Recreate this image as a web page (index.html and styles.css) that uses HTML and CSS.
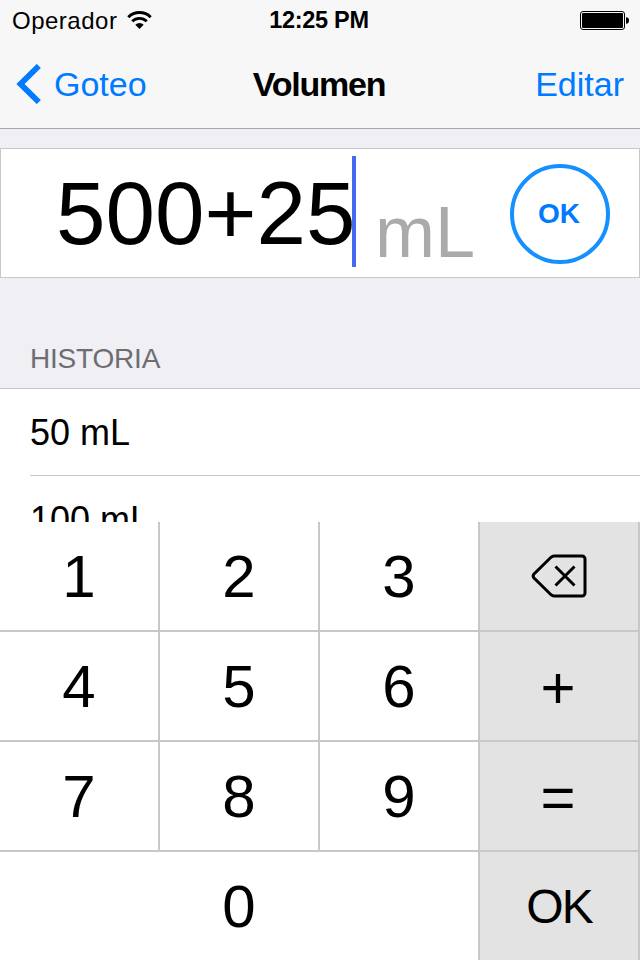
FILE: index.html
```html
<!DOCTYPE html>
<html lang="es">
<head>
    <meta charset="UTF-8">
    <meta name="viewport" content="width=device-width, initial-scale=1.0">
    <title>Volumen</title>
    <link rel="stylesheet" href="styles.css">
</head>
<body>
    <div class="screen">
        <div class="status-bar">
            <div class="carrier">
                <span>Operador</span>
                <svg class="wifi" width="25" height="18" viewBox="0 0 25 18">
                    <path d="M1.300 6.200a15.900 15.900 0 0 1 22.400 0" fill="none" stroke="#000" stroke-width="3"/>
                    <path d="M5.200 10.300a10.400 10.400 0 0 1 14.600 0" fill="none" stroke="#000" stroke-width="2.800"/>
                    <path d="M12.500 18L8.300 13.800a6 6 0 0 1 8.400 0z"/>
                </svg>
            </div>
            <span class="clock">12:25 PM</span>
            <svg class="battery" width="50" height="20" viewBox="0 0 50 20">
                <rect x="0.5" y="0.5" width="44" height="18" rx="2.5" fill="none" stroke="#000"/>
                <rect x="2" y="2" width="41" height="15" rx="1"/>
                <path d="M46 6.3q3 0 3 3.2t-3 3.2z"/>
            </svg>
        </div>

        <div class="nav-bar">
            <a class="nav-back">
                <svg width="25" height="40" viewBox="0 0 25 40">
                    <path d="M22.8 2L4.500 20l18.300 18" fill="none" stroke="#007aff" stroke-width="5.8"/>
                </svg>
                <span>Goteo</span>
            </a>
            <h1>Volumen</h1>
            <a class="nav-edit">Editar</a>
        </div>

        <div class="entry">
            <span class="entry-value">500+25</span>
            <span class="cursor"></span>
            <span class="entry-unit">mL</span>
            <button class="ok-btn">OK</button>
        </div>

        <h2>HISTORIA</h2>
        <ul class="history">
            <li>50 mL</li>
            <li>100 mL</li>
        </ul>

        <div class="keypad">
            <button>1</button>
            <button>2</button>
            <button>3</button>
            <button class="key-action">
                <svg width="56" height="46" viewBox="0 0 56 46">
                    <path d="M23 3h28a3 3 0 0 1 3 3v34a3 3 0 0 1-3 3H23q-1.500 0-3-1.300L3 25q-1.700-2 0-4L20 4.300q1.500-1.300 3-1.300z" fill="none" stroke="#000" stroke-width="3"/>
                    <path d="M24.500 13.500l19 19M43.500 13.500L24.500 32.500" stroke="#000" stroke-width="3"/>
                </svg>
            </button>
            <button>4</button>
            <button>5</button>
            <button>6</button>
            <button class="key-action key-sign">+</button>
            <button>7</button>
            <button>8</button>
            <button>9</button>
            <button class="key-action key-sign">=</button>
            <button class="key-zero">0</button>
            <button class="key-action key-ok">OK</button>
        </div>
    </div>
</body>
</html>
```

FILE: styles.css
```css
* {
    box-sizing: border-box;
}

body {
    margin: 0;
    font-family: "Liberation Sans", Arial, sans-serif;
    color: #000;
}

button {
    font-family: inherit;
    margin: 0;
    padding: 0;
    border: none;
    cursor: pointer;
}

.screen {
    display: flex;
    flex-direction: column;
    width: 640px;
    height: 960px;
    overflow: hidden;
    background: #efeff4;
}

.status-bar {
    display: grid;
    grid-template-columns: 1fr auto 1fr;
    align-items: center;
    flex: none;
    height: 40px;
    padding: 1px 10px 0 12px;
    background: #f7f7f7;
    font-size: 24px;
}

.carrier {
    display: flex;
    align-items: center;
    gap: 10px;
    letter-spacing: 0.5px;
}

.wifi {
    margin-bottom: 1px;
}

.clock {
    padding-right: 4px;
    font-size: 23.5px;
    font-weight: bold;
    letter-spacing: -0.3px;
}

.battery {
    justify-self: end;
}

.nav-bar {
    display: grid;
    grid-template-columns: 1fr auto 1fr;
    align-items: center;
    flex: none;
    height: 89px;
    padding: 0 16px;
    background: #f7f7f7;
    border-bottom: 1px solid #a7a7aa;
    font-size: 34px;
}

.nav-back {
    display: flex;
    align-items: center;
    gap: 13px;
    color: #007aff;
}

.nav-bar h1 {
    margin: 0;
    padding-right: 2px;
    font-size: 34px;
    font-weight: bold;
    letter-spacing: -1.2px;
}

.nav-edit {
    justify-self: end;
    color: #007aff;
}

.entry {
    display: flex;
    flex: none;
    height: 130px;
    margin-top: 19px;
    padding: 0 29px 0 55px;
    background: #fff;
    border: 1px solid #c8c8c8;
}

.entry-value {
    width: 296px;
    font-size: 89px;
    line-height: 128px;
    white-space: nowrap;
}

.cursor {
    width: 4px;
    height: 111px;
    margin-top: 7px;
    background: #426bf2;
}

.entry-unit {
    margin-left: 19px;
    font-size: 72px;
    line-height: 167px;
    color: #aaa;
}

.ok-btn {
    width: 100px;
    height: 100px;
    margin: 15px 0 0 auto;
    padding-right: 2px;
    border: 4px solid #1490ff;
    border-radius: 50%;
    background: #fff;
    color: #007aff;
    font-size: 28px;
    font-weight: bold;
}

h2 {
    flex: none;
    height: 110px;
    margin: 0;
    padding: 65px 30px 0;
    font-size: 28px;
    font-weight: normal;
    line-height: 32px;
    letter-spacing: -0.2px;
    color: #6d6d72;
}

.history {
    flex: none;
    height: 134px;
    margin: 0;
    padding: 0 0 0 30px;
    overflow: hidden;
    list-style: none;
    background: #fff;
    border-top: 1px solid #c8c7cc;
}

.history li {
    height: 87px;
    border-bottom: 1px solid #c8c7cc;
    font-size: 36px;
    line-height: 87px;
}

.history li + li {
    height: 88px;
    line-height: 88px;
}

.keypad {
    display: grid;
    grid-template-columns: repeat(4, 160px);
    grid-template-rows: 110px 110px 110px 108px;
    flex: none;
}

.keypad button {
    display: flex;
    align-items: center;
    justify-content: center;
    background: #fff;
    border-right: 2px solid #c8c8c8;
    border-bottom: 2px solid #c8c8c8;
    font-size: 60px;
    color: #000;
}

.keypad .key-action {
    background: #e3e3e3;
}

.keypad .key-sign {
    padding: 3px 2px 0 0;
}

.keypad .key-zero {
    grid-column: span 3;
    border-bottom: none;
}

.keypad .key-ok {
    border-bottom: none;
    font-size: 48px;
    letter-spacing: -2px;
}
```
